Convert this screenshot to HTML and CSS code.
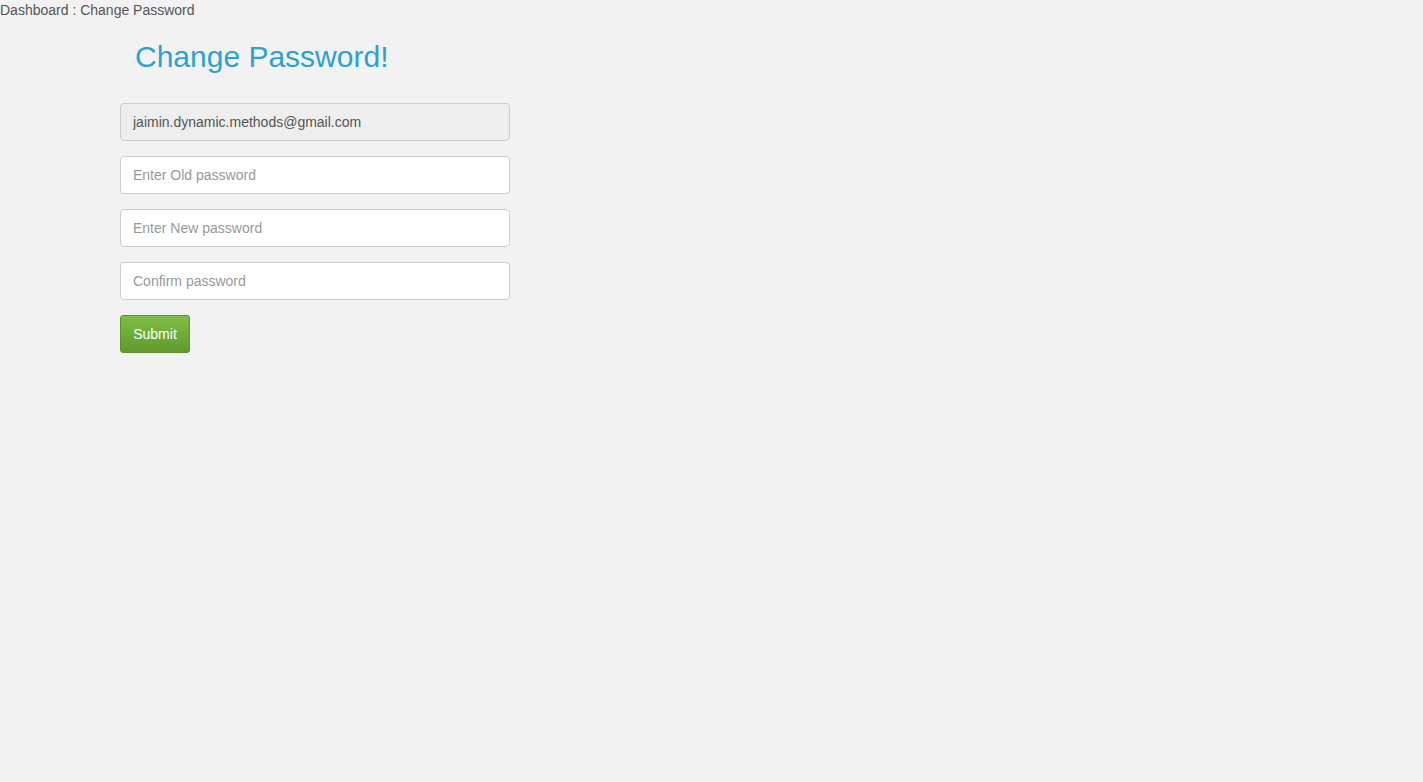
FILE: index.html
```html
<!DOCTYPE html>
<html lang="en">
<head>
    <meta charset="UTF-8">
    <title>Change Password</title>
    <link rel="stylesheet" href="styles.css">
</head>
<body>

<div class="breadcrumb">Dashboard : Change Password</div>

<div class="form-wrap">
    <h2>Change Password!</h2>
    <form>
        <input type="text" class="field readonly" value="jaimin.dynamic.methods@gmail.com" readonly>
        <input type="password" class="field" placeholder="Enter Old password">
        <input type="password" class="field" placeholder="Enter New password">
        <input type="password" class="field" placeholder="Confirm password">
        <button type="button" class="btn-submit">Submit</button>
    </form>
</div>

</body>
</html>
```

FILE: styles.css
```css
body {
    font-family: "Liberation Sans", Arial, sans-serif;
    background-color: #f2f2f2;
    margin: 0;
    padding: 0;
    color: #555;
}
.breadcrumb {
    font-size: 14px;
    line-height: 20px;
    color: #555;
}
.form-wrap {
    width: 390px;
    margin-left: 120px;
}
.form-wrap h2 {
    font-size: 30px;
    font-weight: normal;
    color: #2aa3d0;
    margin: 17px 0 26px 15px;
    line-height: 40px;
}
.field {
    display: block;
    box-sizing: border-box;
    width: 390px;
    height: 38px;
    padding: 0 12px;
    margin-bottom: 15px;
    font-family: "Liberation Sans", Arial, sans-serif;
    font-size: 14px;
    color: #555;
    background: #fff;
    border: 1px solid #ccc;
    border-radius: 4px;
    outline: none;
}
.field::placeholder {
    color: #999;
}
.field.readonly {
    background: #eee;
}
.btn-submit {
    display: block;
    box-sizing: border-box;
    width: 70px;
    height: 38px;
    font-family: "Liberation Sans", Arial, sans-serif;
    font-size: 14px;
    color: #fff;
    background: linear-gradient(#80bd45, #5f9a2c);
    border: 1px solid #5a8f2a;
    border-radius: 3px;
    cursor: pointer;
}
```
